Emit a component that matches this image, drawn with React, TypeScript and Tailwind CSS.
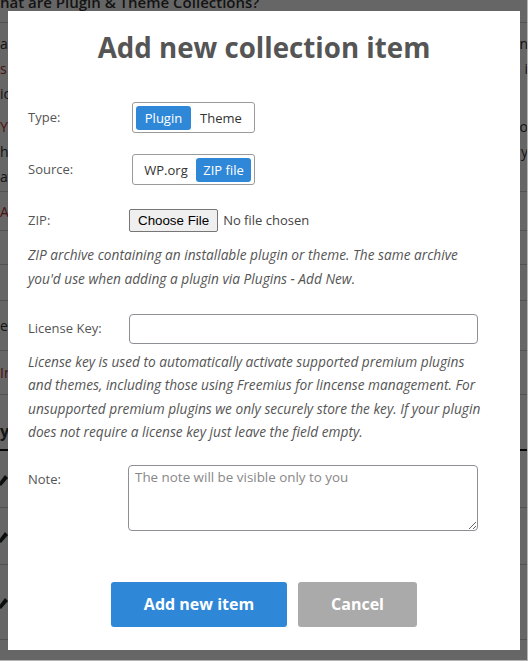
import { useState } from 'react'

type Option = { value: string; label: string }

function Segmented({
  options,
  value,
  onChange,
}: {
  options: Option[]
  value: string
  onChange: (v: string) => void
}) {
  return (
    <div className="inline-flex h-[31px] items-center rounded-[3px] border border-[#9a9a9a] bg-white p-[3px]">
      {options.map((o) => (
        <button
          key={o.value}
          type="button"
          onClick={() => onChange(o.value)}
          className={`h-[24px] rounded-[3px] text-center text-[13px] leading-[24px] ${
            o.value === value ? 'w-[55px] bg-[#2f87d8] text-white' : 'w-[60px] text-[#333]'
          }`}
        >
          {o.label}
        </button>
      ))}
    </div>
  )
}

// the WordPress admin page sitting behind the dialog; only its edges show
function BackgroundPage() {
  return (
    <div className="flex w-[528px] flex-col text-[14px] text-[#333]">
      <div className="-mt-[17px] flex h-[40px] items-center border-b border-[#ccc] text-[15px] font-semibold">
        hat are Plugin &amp; Theme Collections?
      </div>
      <div className="flex flex-col pt-[8px] leading-[25px]">
        <div className="flex justify-between"><span>a</span><span>n</span></div>
        <div className="flex justify-between"><span className="text-[#b32d2e]">s</span><span>i</span></div>
        <div className="flex justify-between"><span>ic</span><span></span></div>
      </div>
      <div className="flex flex-col pt-[8px] leading-[25px]">
        <div className="flex justify-between"><span className="text-[#b32d2e]">YP</span><span>Yo</span></div>
        <div className="flex justify-between"><span>he</span><span>y</span></div>
        <div className="flex justify-between"><span>av</span><span></span></div>
      </div>
      <div className="mt-[2px] flex flex-col border-t border-[#ccc]">
        <div className="flex h-[39px] items-center border-b border-[#ccc] text-[#b32d2e]">A</div>
        <div className="h-[34px] border-b border-[#ccc]" />
        <div className="h-[36px] border-b border-[#ccc]" />
        <div className="flex h-[50px] items-center border-b border-[#ccc]">e</div>
        <div className="flex h-[44px] items-center border-b border-[#ccc] text-[#b32d2e]">In</div>
        <div className="flex h-[56px] items-end border-b-2 border-[#111] pb-[6px] text-[16px] font-bold">y</div>
        {[57, 57, 75].map((h, i) => (
          <div key={i} className="flex items-center border-b border-[#ccc]" style={{ height: h }}>
            <svg width="10" height="14" viewBox="0 0 10 14" className="-ml-[2px]">
              <path d="M0 12 L7 3 L10 6 L3 14 Z" fill="#1d2327" />
            </svg>
          </div>
        ))}
      </div>
    </div>
  )
}

export default function App() {
  const [type, setType] = useState('plugin')
  const [source, setSource] = useState('zip')

  return (
    <div className="relative h-[661px] w-[528px] overflow-hidden bg-white font-['Open_Sans',sans-serif]">
      <BackgroundPage />

      {/* dimmed overlay with the dialog */}
      <div className="absolute inset-0 border-r border-b border-[#b4b4b4] bg-black/60 pt-[11px] pl-[8px]">
        <div className="flex h-[639px] w-[512px] flex-col bg-white pt-[18px] pl-[20px] text-[#555]">
          <h1 className="-ml-[20px] text-center text-[27.7px] leading-[36px] font-bold text-[#555]">
            Add new collection item
          </h1>

          <div className="mt-[37px] flex w-[450px] flex-col text-[13px]">
            <div className="flex items-center">
              <span className="w-[104px]">Type:</span>
              <Segmented
                options={[
                  { value: 'plugin', label: 'Plugin' },
                  { value: 'theme', label: 'Theme' },
                ]}
                value={type}
                onChange={setType}
              />
            </div>

            <div className="mt-[21px] flex items-center">
              <span className="w-[104px]">Source:</span>
              <Segmented
                options={[
                  { value: 'wp', label: 'WP.org' },
                  { value: 'zip', label: 'ZIP file' },
                ]}
                value={source}
                onChange={setSource}
              />
            </div>

            <div className="mt-[24px] flex items-center">
              <span className="w-[101px]">ZIP:</span>
              <span className="flex h-[23px] items-center rounded-[2px] border border-[#767676] bg-[#efefef] px-[8px] font-['Liberation_Sans',sans-serif] text-[13.33px] text-black">
                Choose File
              </span>
              <span className="ml-[5px] text-[13px] text-[#444]">No file chosen</span>
            </div>

            <p className="mt-[11px] text-[13.7px] leading-[23.5px] italic">
              <span className="block whitespace-nowrap">ZIP archive containing an installable plugin or theme. The same archive</span>
              <span className="block whitespace-nowrap">you'd use when adding a plugin via Plugins - Add New.</span>
            </p>

            <div className="mt-[24px] flex items-center">
              <span className="w-[101px]">License Key:</span>
              <input
                type="text"
                className="h-[30px] flex-1 rounded-[4px] border border-[#8c8f94] px-2 text-[14px] outline-none"
              />
            </div>

            <p className="mt-[6px] text-[13.7px] leading-[23.4px] italic">
              <span className="block whitespace-nowrap">License key is used to automatically activate supported premium plugins</span>
              <span className="block whitespace-nowrap">and themes, including those using Freemius for lincense management. For</span>
              <span className="block whitespace-nowrap">unsupported premium plugins we only securely store the key. If your plugin</span>
              <span className="block whitespace-nowrap">does not require a license key just leave the field empty.</span>
            </p>

            <div className="mt-[21px] flex items-start">
              <span className="w-[100px] pt-[5px]">Note:</span>
              <textarea
                placeholder="The note will be visible only to you"
                className="h-[66px] flex-1 rounded-[4px] border border-[#8c8f94] px-[6px] py-[1px] text-[13.4px] text-[#333] outline-none placeholder:text-[#888]"
              />
            </div>
          </div>

          <div className="mt-[51px] -ml-[20px] flex justify-center gap-[11px]">
            <button
              type="button"
              className="h-[45px] w-[176px] rounded-[3px] bg-[#2f87d8] text-[16px] font-bold text-white"
            >
              Add new item
            </button>
            <button
              type="button"
              className="h-[45px] w-[119px] rounded-[3px] bg-[#aaaaaa] text-[16px] font-bold text-white"
            >
              Cancel
            </button>
          </div>
        </div>
      </div>
    </div>
  )
}
